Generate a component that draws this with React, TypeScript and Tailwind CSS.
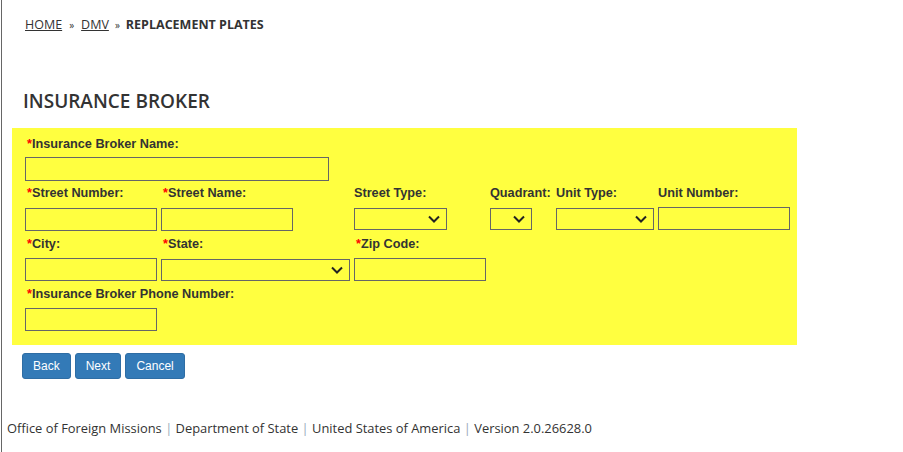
import { ReactNode } from "react";

const sans = "font-['Open_Sans',_'Liberation_Sans',_sans-serif]";
const label = "font-['Liberation_Sans',_Arial,_sans-serif] text-[12.7px] font-bold leading-[14px] text-[#333]";

function Label({ text, required }: { text: string; required?: boolean }) {
  return (
    <div className={`${label} ${required ? "pl-[2px]" : ""}`}>
      {required && <span className="text-[#f00]">*</span>}
      {text}
    </div>
  );
}

function Box({ className = "" }: { className?: string }) {
  return <div className={`h-[23px] border border-[#666] bg-transparent ${className}`} />;
}

function Select({ className = "" }: { className?: string }) {
  return (
    <div className={`flex h-[22px] items-center justify-end border border-[#666] pr-[6px] ${className}`}>
      <svg viewBox="0 0 12 8" className="h-[8px] w-[12px]" fill="none" stroke="#222" strokeWidth="2">
        <path d="M1 1.5l5 5 5-5" />
      </svg>
    </div>
  );
}

function Field({ children }: { children: ReactNode }) {
  return <div className="flex flex-col">{children}</div>;
}

export default function App() {
  return (
    <div className="relative ml-[1px] min-h-[452px] w-[902px] border-l border-[#666] bg-white">
      <div className={`${sans} pl-[23px] pt-[17px] text-[12.5px] leading-[16px] text-[#333]`}>
        <a className="underline">HOME</a>
        <span className="mx-[7px] text-[10px]">»</span>
        <a className="underline">DMV</a>
        <span className="mx-[6px] text-[10px]">»</span>
        <span className="font-bold">REPLACEMENT PLATES</span>
      </div>

      <h1 className={`${sans} mt-[57px] pl-[21px] text-[19px] font-semibold leading-[22px] text-[#333]`}>
        INSURANCE BROKER
      </h1>

      <div className="ml-[10px] mt-[16px] w-[785px] bg-[#ffff40] pb-[14px] pl-[13px] pt-[9px]">
        <Label text="Insurance Broker Name:" required />
        <Box className="mt-[6px] h-[24px] w-[304px]" />

        <div className="mt-[5px] grid grid-cols-[136px_193px_136px_66px_102px_132px] items-start">
          <Field>
            <Label text="Street Number:" required />
            <Box className="mt-[8px] w-[132px]" />
          </Field>
          <Field>
            <Label text="Street Name:" required />
            <Box className="mt-[8px] w-[132px]" />
          </Field>
          <Field>
            <Label text="Street Type:" />
            <Select className="mt-[8px] w-[93px]" />
          </Field>
          <Field>
            <Label text="Quadrant:" />
            <Select className="mt-[8px] w-[42px]" />
          </Field>
          <Field>
            <Label text="Unit Type:" />
            <Select className="mt-[8px] w-[98px]" />
          </Field>
          <Field>
            <Label text="Unit Number:" />
            <Box className="mt-[7px] w-[132px]" />
          </Field>
        </div>

        <div className="mt-[6px] grid grid-cols-[136px_193px_136px] items-start">
          <Field>
            <Label text="City:" required />
            <Box className="mt-[7px] w-[132px]" />
          </Field>
          <Field>
            <Label text="State:" required />
            <Select className="mt-[8px] w-[189px]" />
          </Field>
          <Field>
            <Label text="Zip Code:" required />
            <Box className="mt-[7px] w-[132px]" />
          </Field>
        </div>

        <div className="mt-[6px]">
          <Label text="Insurance Broker Phone Number:" required />
          <Box className="mt-[7px] w-[132px]" />
        </div>
      </div>

      <div className="ml-[20px] mt-[8px] flex gap-[4px] font-['Liberation_Sans',_Arial,_sans-serif] text-[12px] text-white">
        <button className="h-[26px] rounded-[3px] border border-[#2e6da4] bg-[#337ab7] px-[10px]">Back</button>
        <button className="h-[26px] rounded-[3px] border border-[#2e6da4] bg-[#337ab7] px-[10px]">Next</button>
        <button className="h-[26px] rounded-[3px] border border-[#2e6da4] bg-[#337ab7] px-[10px]">Cancel</button>
      </div>

      <div className={`${sans} mt-[41px] pl-[5px] text-[12.9px] leading-[16px] text-[#333]`}>
        Office of Foreign Missions <span className="text-[#9ab]">|</span> Department of State{" "}
        <span className="text-[#9ab]">|</span> United States of America <span className="text-[#9ab]">|</span> Version
        2.0.26628.0
      </div>
    </div>
  );
}
